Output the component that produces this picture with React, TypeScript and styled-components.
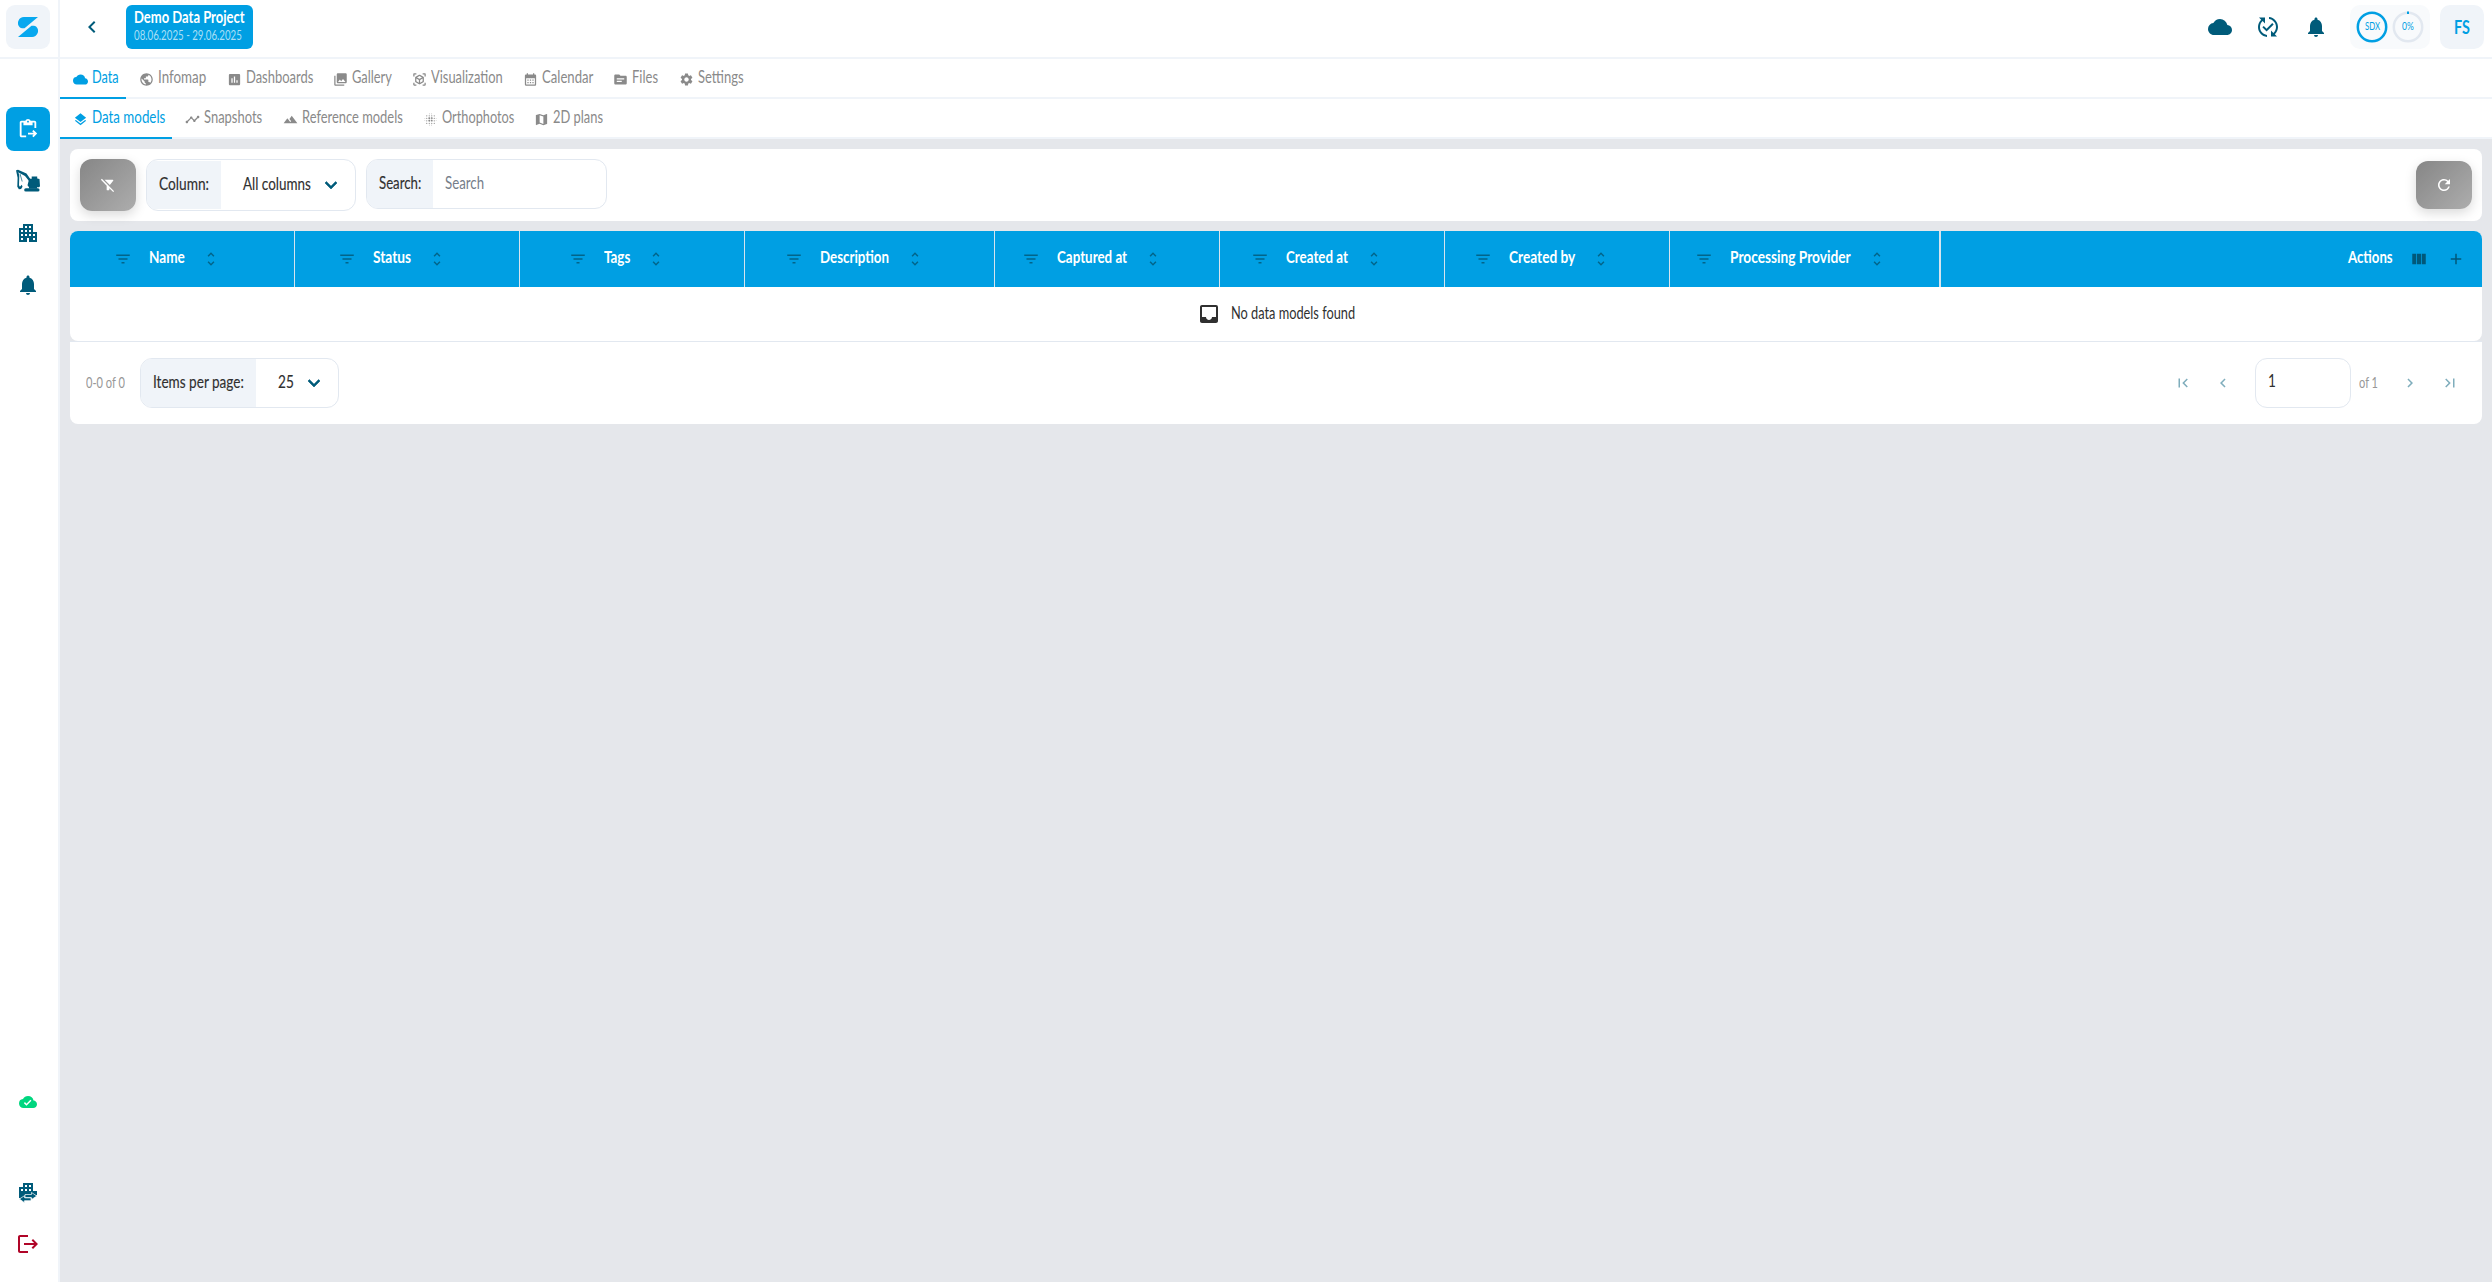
import React, { useLayoutEffect, useRef, useState } from 'react';
import styled, { createGlobalStyle, css } from 'styled-components';
import type { IconType } from 'react-icons';
import {
  MdAdd,
  MdApartment,
  MdAssessment,
  MdBlurOn,
  MdCalendarMonth,
  MdChevronLeft,
  MdChevronRight,
  MdCloud,
  MdCloudDone,
  MdCollections,
  MdContentPasteGo,
  MdExpandMore,
  MdFilterAltOff,
  MdFilterList,
  MdFirstPage,
  MdInbox,
  MdLandscape,
  MdLastPage,
  MdLayers,
  MdMap,
  MdNotifications,
  MdPublic,
  MdPublishedWithChanges,
  MdRefresh,
  MdSettings,
  MdSource,
  MdTimeline,
  MdUnfoldMore,
  MdViewColumn,
  MdViewInAr,
} from 'react-icons/md';

const color = {
  primary: '#009fe3',
  petrol: '#005b7a',
  border: '#e2e8f0',
  line: '#f0f4f9',
  soft: '#f0f4f9',
  muted: '#8a8a8a',
  text: '#303030',
  page: '#e5e7eb',
};

const GlobalStyle = createGlobalStyle`
  *, *::before, *::after { box-sizing: border-box; }
  body {
    margin: 0;
    background: ${color.page};
    color: ${color.text};
    font-family: Lato, 'Open Sans', sans-serif;
    font-size: 17px;
    line-height: 20px;
  }
  svg { display: block; flex: none; }
`;

/* Condensed text: the glyphs are squeezed to the given advance width. */
const CondensedBox = styled.span<{ $width: number; $size?: number }>`
  display: block;
  flex: none;
  width: ${(p) => p.$width}px;
  font-size: ${(p) => p.$size ?? 17}px;
  white-space: nowrap;
`;

const CondensedText = styled.span`
  display: inline-block;
  vertical-align: top;
  transform-origin: 0 50%;
`;

function Condensed({ width, size, children }: { width: number; size?: number; children: string }) {
  const ref = useRef<HTMLSpanElement>(null);
  const [scale, setScale] = useState(0.8);
  useLayoutEffect(() => {
    if (ref.current) setScale(width / ref.current.offsetWidth);
  }, [width, children]);
  return (
    <CondensedBox $width={width} $size={size}>
      <CondensedText ref={ref} style={{ transform: `scaleX(${scale})` }}>
        {children}
      </CondensedText>
    </CondensedBox>
  );
}

const Shell = styled.div`
  display: grid;
  grid-template-columns: 60px 1fr;
  height: 1282px;
`;

const Sidebar = styled.nav`
  display: flex;
  flex-direction: column;
  background: #fff;
  border-right: 2px solid ${color.line};
`;

const LogoArea = styled.div`
  height: 59px;
  padding: 5px 6px;
  border-bottom: 2px solid ${color.line};
`;

const Tile = styled.div<{ $active?: boolean; $tone?: string }>`
  display: grid;
  place-items: center;
  width: 44px;
  height: 44px;
  border-radius: 8px;
  color: ${(p) => p.$tone ?? color.petrol};
  ${(p) =>
    p.$active &&
    css`
      background: ${color.primary};
      color: #fff;
    `}
`;

const LogoTile = styled(Tile)`
  background: ${color.soft};
  color: #08a8ef;
  border-radius: 9px;
`;

const NavGroup = styled.div`
  display: flex;
  flex-direction: column;
  gap: 8px;
  padding: 48px 6px 0;
`;

const NavFooter = styled.div`
  display: flex;
  flex-direction: column;
  gap: 8px;
  margin-top: auto;
  padding: 0 6px 16px;
`;

const SyncState = styled(Tile)`
  margin-bottom: 38px;
`;

const SwitchTile = styled(Tile)`
  padding-top: 2px;
`;

const Main = styled.main`
  display: flex;
  flex-direction: column;
  min-width: 0;
`;

const Header = styled.header`
  display: flex;
  align-items: flex-start;
  height: 59px;
  padding: 5px 8px 0 20px;
  background: #fff;
  border-bottom: 2px solid ${color.line};
`;

const BackButton = styled.div`
  display: grid;
  place-items: center;
  width: 24px;
  height: 44px;
  color: ${color.petrol};
`;

const ProjectBadge = styled.div`
  width: 127px;
  height: 44px;
  margin-left: 22px;
  padding: 2px 8px;
  border-radius: 6px;
  background: ${color.primary};
  color: #fff;
`;

const ProjectName = styled.div`
  font-weight: 700;
  height: 20px;
`;

const ProjectDates = styled.div`
  height: 16px;
  line-height: 16px;
  margin-top: 1px;
  color: #a9dff6;
`;

const HeaderActions = styled.div`
  display: flex;
  align-items: center;
  height: 44px;
  margin-left: auto;
  color: ${color.petrol};
`;

const HeaderIcon = styled.div`
  display: grid;
  place-items: center;
  width: 48px;
`;

const UsageChip = styled.div`
  display: flex;
  align-items: center;
  gap: 4px;
  width: 80px;
  height: 44px;
  margin-left: 10px;
  padding: 0 6px 0 6px;
  border-radius: 10px;
  background: #f8fafc;
`;

const Gauge = styled.div`
  display: grid;
  width: 32px;
  height: 32px;
  place-items: center;
  color: ${color.primary};
  > * { grid-area: 1 / 1; }
  > span { margin-bottom: 2px; }
`;

const Avatar = styled.div`
  display: grid;
  place-items: center;
  width: 44px;
  height: 44px;
  margin-left: 10px;
  border-radius: 10px;
  background: ${color.soft};
  color: ${color.primary};
  font-weight: 700;
`;

const TabRow = styled.div`
  display: flex;
  height: 40px;
  background: #fff;
  box-shadow: inset 0 -2px 0 ${color.line};
`;

const TabItem = styled.div<{ $width: number; $active?: boolean }>`
  display: flex;
  align-items: center;
  gap: 4.5px;
  width: ${(p) => p.$width}px;
  padding-left: 12.5px;
  border-bottom: 2px solid ${(p) => (p.$active ? color.primary : 'transparent')};
  color: ${(p) => (p.$active ? color.primary : color.muted)};
  > svg { margin-top: 2px; }
  > span { margin-top: -2px; }
`;

const Content = styled.div`
  display: flex;
  flex-direction: column;
  gap: 10px;
  padding: 10px;
`;

const Toolbar = styled.section`
  display: flex;
  align-items: flex-start;
  height: 72px;
  padding: 10px;
  border-radius: 8px;
  background: #fff;
`;

const GreyButton = styled.div<{ $height: number }>`
  display: grid;
  place-items: center;
  width: 56px;
  height: ${(p) => p.$height}px;
  border-radius: 12px;
  background: linear-gradient(135deg, #868686, #adadad);
  box-shadow: 0 4px 12px rgba(0, 0, 0, 0.15);
  color: #fff;
`;

const RefreshSlot = styled.div`
  margin: 2px 0 0 auto;
`;

const Field = styled.div<{ $width: number; $height: number; $inset?: number }>`
  display: flex;
  width: ${(p) => p.$width}px;
  height: ${(p) => p.$height}px;
  padding: ${(p) => p.$inset ?? 0}px 0;
  border: 1px solid ${color.border};
  border-radius: 12px;
  background: #fff;
  overflow: hidden;
`;

const FieldLabel = styled.div<{ $width: number }>`
  display: flex;
  align-items: center;
  width: ${(p) => p.$width}px;
  padding: 0 0 3px 12px;
  background: ${color.soft};
  -webkit-text-stroke: 0.15px currentColor;
`;

const FieldValue = styled.div<{ $pad: number; $gap?: number; $placeholder?: boolean }>`
  display: flex;
  align-items: center;
  gap: ${(p) => p.$gap ?? 0}px;
  padding: 0 0 3px ${(p) => p.$pad}px;
  color: ${(p) => (p.$placeholder ? '#757d8a' : color.text)};
  -webkit-text-stroke: ${(p) => (p.$placeholder ? 0 : 0.15)}px currentColor;
  > svg {
    margin-top: 3px;
    color: ${color.petrol};
    stroke: none;
  }
  > svg path:last-child {
    stroke: currentColor;
    stroke-width: 0.6px;
  }
`;

const ToolbarFields = styled.div`
  display: flex;
  gap: 10px;
  margin-left: 10px;
`;

const TableCard = styled.section`
  display: flex;
  flex-direction: column;
`;

const TableFrame = styled.div`
  border-radius: 8px;
  background: #fff;
  overflow: hidden;
`;

const HeadRow = styled.div`
  display: grid;
  grid-template-columns: 225px 225px 225px 250px 225px 225px 225px 271px 1fr;
  height: 56px;
  background: ${color.primary};
`;

const HeadCell = styled.div<{ $divider?: number }>`
  display: flex;
  align-items: center;
  justify-content: center;
  padding-right: ${(p) => 31 - (p.$divider ?? 1)}px;
  border-right: ${(p) => p.$divider ?? 1}px solid #d6e4ee;
  color: #fff;
  font-weight: 700;
  > span { margin: 0 17px 4px 17px; }
  > svg { color: #026489; }
`;

const ActionsCell = styled.div`
  display: flex;
  align-items: center;
  justify-content: flex-end;
  gap: 19px;
  padding-right: 17px;
  color: #fff;
  font-weight: 700;
  > span { margin: 0 -2px 4px 0; }
  > svg { color: #00587a; }
`;

const EmptyRow = styled.div`
  display: flex;
  align-items: center;
  justify-content: center;
  gap: 10px;
  height: 54px;
  > span { margin: 0 0 2px; }
`;

const Footer = styled.div`
  display: flex;
  align-items: center;
  height: 83px;
  padding: 0 12px 0 16px;
  border-top: 1px solid ${color.border};
  border-radius: 0 0 8px 8px;
  background: #fff;
`;

const Note = styled.div<{ $right: number }>`
  margin: 0 ${(p) => p.$right}px 1px 0;
  color: #979797;
`;

const Pager = styled.div`
  display: flex;
  align-items: center;
  margin-left: auto;
  color: #7fadbc;
`;

const PagerButton = styled.div<{ $width: number }>`
  display: grid;
  place-items: center;
  width: ${(p) => p.$width}px;
`;

const PageInput = styled.div`
  width: 96px;
  height: 50px;
  margin: 0 8px 0 12px;
  padding: 12px 12px;
  border: 1px solid ${color.border};
  border-radius: 12px;
  color: ${color.text};
`;

const LogoMark = () => (
  <svg width="20" height="20" viewBox="0 0 20 20" fill="currentColor">
    <path d="M20 0H6a6 6 0 0 0-4.3 10.2c.9.8 1.8 1 3.3 1h1.5z" />
    <path d="M0 20h14a6 6 0 0 0 4.3-10.2c-.9-.8-1.8-1-3.3-1h-1.5z" />
  </svg>
);

const Excavator = () => (
  <svg width="26" height="24" viewBox="0 0 26 24" fill="currentColor">
    <path d="M1 1.200 3 .8l8.500 3.700 4.700 6.800-.8 2.500-5.400-6.800L3.500 3.600z" />
    <path d="M1 1.200 3.200 2.600 4.300 6.500 4 16.200l.9 1.600 1.900-2 .7 2-1.400 2.200-2.200.3-1.600-2.600.3-9z" />
    <path d="M5 4.800 7.200 12.500" fill="none" stroke="currentColor" strokeWidth=".7" />
    <path d="M14.200 9.800h2.500V7.400h5.500v2.100l2.300.5.5 7.200-1 1.100H14l-1.500-2z" />
    <rect x="9.200" y="19.200" width="15.300" height="3.300" rx="1.600" />
    <path d="M14 17.500h8v2.200h-8z" />
  </svg>
);

const CompanySwitch = () => (
  <svg width="18" height="20" viewBox="0 0 18 20" fill="currentColor">
    <path
      fillRule="evenodd"
      d="M4 0h10v8h4v4H6v4H3l-1.500-1H0V4h4zM6 2v2h2V2zm4 0v2h2V2zM6 6v2h2V6zm4 0v2h2V6zM2 6v2h2V6z"
    />
    <path
      d="M6 11.500h6.500v-2l5.300 3.500-5.300 3.500v-1.800H6z M12 14.700v3H5.500v2L.4 16l5.100-3.300v2z"
      stroke="#fff"
      strokeWidth=".7"
    />
  </svg>
);

const Logout = () => (
  <svg width="24" height="24" viewBox="0 0 24 24" fill="currentColor">
    <path d="M17 7l-1.410 1.410L18.170 11H8v2h10.170l-2.580 2.580L17 17l5-5zM4 5h8V3H4c-1.100 0-2 .9-2 2v14c0 1.100.9 2 2 2h8v-2H4z" />
  </svg>
);

type Tab = { label: string; icon: IconType; width: number; text: number };

const mainTabs: Tab[] = [
  { label: 'Data', icon: MdCloud, width: 66, text: 27 },
  { label: 'Infomap', icon: MdPublic, width: 88, text: 48 },
  { label: 'Dashboards', icon: MdAssessment, width: 106, text: 67 },
  { label: 'Gallery', icon: MdCollections, width: 79, text: 40 },
  { label: 'Visualization', icon: MdViewInAr, width: 111, text: 72 },
  { label: 'Calendar', icon: MdCalendarMonth, width: 90, text: 51 },
  { label: 'Files', icon: MdSource, width: 66, text: 26 },
  { label: 'Settings', icon: MdSettings, width: 85, text: 46 },
];

const dataTabs: Tab[] = [
  { label: 'Data models', icon: MdLayers, width: 112, text: 73 },
  { label: 'Snapshots', icon: MdTimeline, width: 98, text: 58 },
  { label: 'Reference models', icon: MdLandscape, width: 140, text: 101 },
  { label: 'Orthophotos', icon: MdBlurOn, width: 111, text: 72 },
  { label: '2D plans', icon: MdMap, width: 91, text: 50 },
];

const columns = [
  { label: 'Name', text: 36 },
  { label: 'Status', text: 38 },
  { label: 'Tags', text: 26 },
  { label: 'Description', text: 69 },
  { label: 'Captured at', text: 70 },
  { label: 'Created at', text: 62 },
  { label: 'Created by', text: 66 },
  { label: 'Processing Provider', text: 121 },
];

function Tabs({ items }: { items: Tab[] }) {
  return (
    <TabRow>
      {items.map(({ label, icon: Icon, width, text }, i) => (
        <TabItem key={label} $width={width} $active={i === 0}>
          <Icon size={15} />
          <Condensed width={text}>{label}</Condensed>
        </TabItem>
      ))}
    </TabRow>
  );
}

function Ring({ label, text, full }: { label: string; text: number; full?: boolean }) {
  return (
    <Gauge>
      <svg width="32" height="32" viewBox="0 0 32 32" fill="none" strokeWidth="2.5">
        <circle cx="16" cy="16" r="14.2" stroke={full ? color.primary : color.border} />
        {!full && <path d="M15 1.800h2" stroke={color.primary} />}
      </svg>
      <Condensed width={text} size={12}>
        {label}
      </Condensed>
    </Gauge>
  );
}

export default function App() {
  return (
    <>
      <GlobalStyle />
      <Shell>
        <Sidebar>
          <LogoArea>
            <LogoTile>
              <LogoMark />
            </LogoTile>
          </LogoArea>
          <NavGroup>
            <Tile $active>
              <MdContentPasteGo size={22} />
            </Tile>
            <Tile>
              <Excavator />
            </Tile>
            <Tile>
              <MdApartment size={24} />
            </Tile>
            <Tile>
              <MdNotifications size={24} />
            </Tile>
          </NavGroup>
          <NavFooter>
            <SyncState $tone="#00d67f">
              <MdCloudDone size={18} />
            </SyncState>
            <SwitchTile>
              <CompanySwitch />
            </SwitchTile>
            <Tile $tone="#b00528">
              <Logout />
            </Tile>
          </NavFooter>
        </Sidebar>
        <Main>
          <Header>
            <BackButton>
              <MdChevronLeft size={24} />
            </BackButton>
            <ProjectBadge>
              <ProjectName>
                <Condensed width={111}>Demo Data Project</Condensed>
              </ProjectName>
              <ProjectDates>
                <Condensed width={108} size={12.5}>
                  08.06.2025 - 29.06.2025
                </Condensed>
              </ProjectDates>
            </ProjectBadge>
            <HeaderActions>
              <HeaderIcon>
                <MdCloud size={24} />
              </HeaderIcon>
              <HeaderIcon>
                <MdPublishedWithChanges size={24} />
              </HeaderIcon>
              <HeaderIcon>
                <MdNotifications size={24} />
              </HeaderIcon>
              <UsageChip>
                <Ring label="SDX" text={15} full />
                <Ring label="0%" text={12} />
              </UsageChip>
              <Avatar>
                <Condensed width={16} size={18}>
                  FS
                </Condensed>
              </Avatar>
            </HeaderActions>
          </Header>
          <Tabs items={mainTabs} />
          <Tabs items={dataTabs} />
          <Content>
            <Toolbar>
              <GreyButton $height={52}>
                <MdFilterAltOff size={16} />
              </GreyButton>
              <ToolbarFields>
                <Field $width={210} $height={52} $inset={1}>
                  <FieldLabel $width={74}>
                    <Condensed width={50}>Column:</Condensed>
                  </FieldLabel>
                  <FieldValue $pad={22} $gap={8}>
                    <Condensed width={68}>All columns</Condensed>
                    <MdExpandMore size={24} />
                  </FieldValue>
                </Field>
                <Field $width={241} $height={50}>
                  <FieldLabel $width={66}>
                    <Condensed width={42}>Search:</Condensed>
                  </FieldLabel>
                  <FieldValue $pad={12} $placeholder>
                    <Condensed width={39}>Search</Condensed>
                  </FieldValue>
                </Field>
              </ToolbarFields>
              <RefreshSlot>
                <GreyButton $height={48}>
                  <MdRefresh size={18} />
                </GreyButton>
              </RefreshSlot>
            </Toolbar>
            <TableCard>
              <TableFrame>
                <HeadRow>
                  {columns.map(({ label, text }, i) => (
                    <HeadCell key={label} $divider={i === columns.length - 1 ? 2 : 1}>
                      <MdFilterList size={18} />
                      <Condensed width={text}>{label}</Condensed>
                      <MdUnfoldMore size={18} />
                    </HeadCell>
                  ))}
                  <ActionsCell>
                    <Condensed width={45}>Actions</Condensed>
                    <MdViewColumn size={18} />
                    <MdAdd size={18} />
                  </ActionsCell>
                </HeadRow>
                <EmptyRow>
                  <MdInbox size={24} />
                  <Condensed width={124}>No data models found</Condensed>
                </EmptyRow>
              </TableFrame>
              <Footer>
                <Note $right={15}>
                  <Condensed width={39} size={14.5}>
                    0-0 of 0
                  </Condensed>
                </Note>
                <Field $width={199} $height={50}>
                  <FieldLabel $width={115}>
                    <Condensed width={91}>Items per page:</Condensed>
                  </FieldLabel>
                  <FieldValue $pad={22} $gap={8}>
                    <Condensed width={16}>25</Condensed>
                    <MdExpandMore size={24} />
                  </FieldValue>
                </Field>
                <Pager>
                  <PagerButton $width={40}>
                    <MdFirstPage size={18} />
                  </PagerButton>
                  <PagerButton $width={40}>
                    <MdChevronLeft size={18} />
                  </PagerButton>
                  <PageInput>
                    <Condensed width={8}>1</Condensed>
                  </PageInput>
                  <Note $right={12}>
                    <Condensed width={19} size={14.5}>
                      of 1
                    </Condensed>
                  </Note>
                  <PagerButton $width={40}>
                    <MdChevronRight size={18} />
                  </PagerButton>
                  <PagerButton $width={40}>
                    <MdLastPage size={18} />
                  </PagerButton>
                </Pager>
              </Footer>
            </TableCard>
          </Content>
        </Main>
      </Shell>
    </>
  );
}
